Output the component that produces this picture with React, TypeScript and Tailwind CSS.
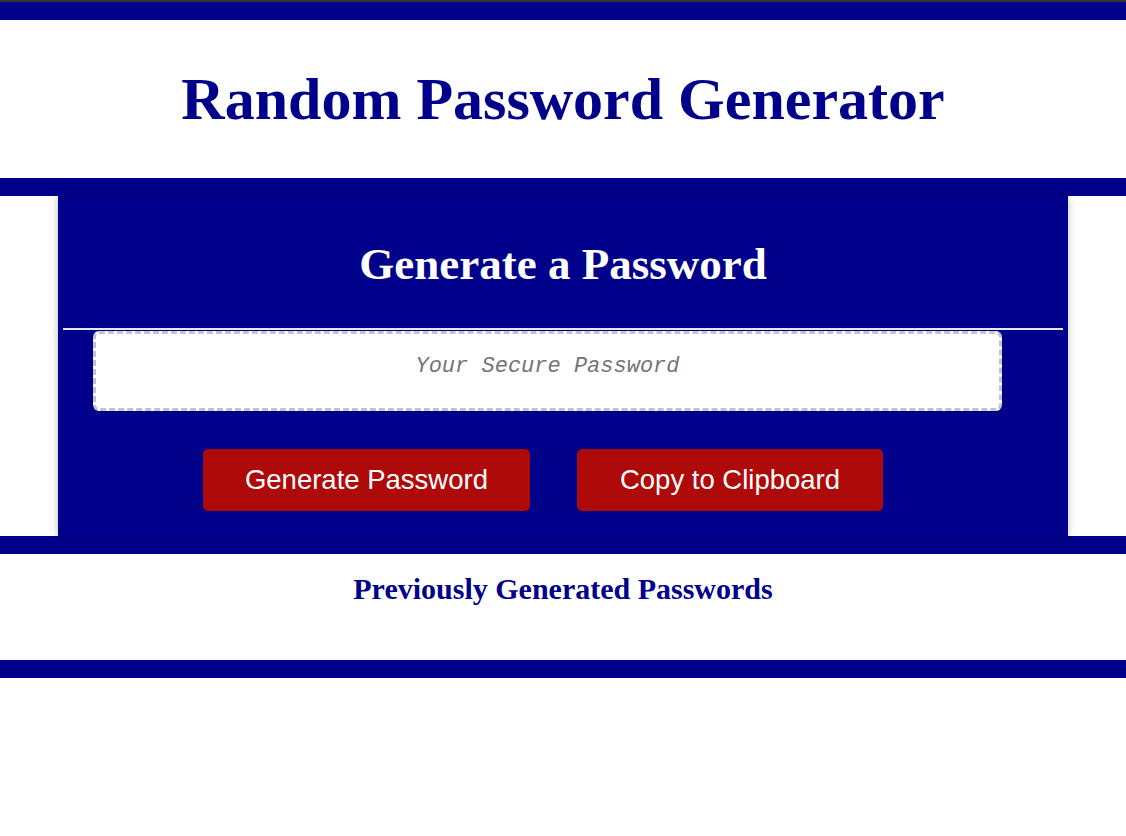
export default function App() {
  return (
    <div className="min-h-[836px] bg-white">
      <div className="h-[2px] bg-[#333333]" />
      <div className="h-[18px] bg-[#00008b]" />

      <header className="flex h-[158px] items-center justify-center">
        <h1 className="font-['Liberation_Serif',serif] text-[60px] font-bold text-[#00008b]">
          Random Password Generator
        </h1>
      </header>

      <section className="border-y-[18px] border-[#00008b]">
        <div className="mx-auto h-[340px] w-[1010px] bg-[#00008b] shadow-[0_0_8px_rgba(0,0,0,0.25)]">
          <div className="flex h-[132px] items-center justify-center pt-[6px]">
            <h2 className="font-['Liberation_Serif',serif] text-[45px] font-bold text-white">
              Generate a Password
            </h2>
          </div>
          <div className="mx-[5px] h-[2px] bg-[#e6e6e6]" />
          <textarea
            readOnly
            placeholder="Your Secure Password"
            className="ml-[35px] mt-[1px] block h-[80px] w-[909px] resize-none rounded-[6px] border-[3px] border-dashed border-[#c0c4cc] bg-white pt-[16px] text-center font-['Liberation_Mono',monospace] text-[22px] italic outline-none placeholder:text-[#757575]"
          />
          <div className="mt-[38px] flex justify-center gap-[47px] pr-[40px]">
            <button className="h-[62px] rounded-[5px] bg-[#af0a0a] px-[42px] font-['Liberation_Sans',sans-serif] text-[27.5px] text-white">
              Generate Password
            </button>
            <button className="h-[62px] rounded-[5px] bg-[#af0a0a] px-[43px] font-['Liberation_Sans',sans-serif] text-[27.5px] text-white">
              Copy to Clipboard
            </button>
          </div>
        </div>
      </section>

      <section className="flex h-[106px] justify-center pt-[12px]">
        <h3 className="font-['Liberation_Serif',serif] text-[30px] font-bold text-[#00008b]">
          Previously Generated Passwords
        </h3>
      </section>
      <div className="h-[18px] bg-[#00008b]" />
    </div>
  );
}
